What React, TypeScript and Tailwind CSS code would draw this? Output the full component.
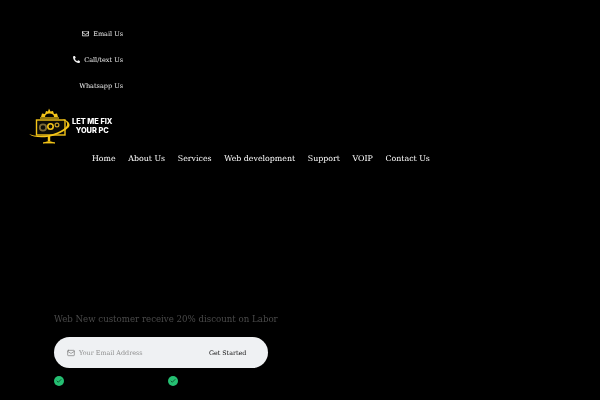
import { Check, Mail } from "lucide-react";
import { FaPhoneAlt, FaRegEnvelope } from "react-icons/fa";

const serif = "font-['DejaVu_Serif',serif]";

function Logo() {
  return (
    <div className="flex items-center w-[84px] h-[36px] [will-change:transform]">
      <svg width="45" height="36" viewBox="0 0 45 36" fill="none" className="shrink-0">
        <path d="M13 9 L14 5.5 L17 6 L18 3 L20 3.5 L21 0.5 L22.5 3.5 L25 3 L26 6 L29 5.5 L30 9 Z" fill="#f5c518" />
        <path d="M17 9 A4.5 3.5 0 0 1 26 9 Z" fill="#000" />
        <path d="M12 10 H31" stroke="#f5c518" strokeWidth="1.2" />
        <rect x="8.5" y="12" width="28.5" height="15" fill="#0c0c08" stroke="#f5c518" strokeWidth="1.4" />
        <circle cx="15" cy="19.5" r="3.2" stroke="#7d6a35" strokeWidth="1.8" />
        <circle cx="22.5" cy="18.5" r="2.7" stroke="#f5c518" strokeWidth="1.6" />
        <circle cx="29" cy="17" r="1.9" stroke="#c9a227" strokeWidth="1.2" />
        <path d="M1 26 C 8 32, 30 30, 41 19 C 43 16, 40 12, 34 11 C 39 13, 40.5 16, 38 19 C 28 28, 10 30, 1 26 Z" fill="#f5c518" />
        <path d="M21 28 V33" stroke="#f5c518" strokeWidth="2.4" />
        <path d="M15 35 Q21 32 27 35 Z" fill="#f5c518" stroke="#f5c518" strokeWidth="0.8" />
      </svg>
      <div className="-ml-[1px] font-['Inter',sans-serif] font-extrabold text-white text-[7.4px] leading-[9px] text-center whitespace-nowrap">
        <div>LET ME FIX</div>
        <div>YOUR PC</div>
      </div>
    </div>
  );
}

export default function App() {
  const nav = ["Home", "About Us", "Services", "Web development", "Support", "VOIP", "Contact Us"];
  return (
    <div className={`w-[600px] h-[400px] overflow-hidden bg-black text-white ${serif}`}>
      <div className="w-[123px] pt-[20px] flex flex-col items-end text-[6.5px] text-[#f0f0f0] [will-change:transform]">
        <div className="h-[26px] flex items-center gap-[4px]">
          <FaRegEnvelope size={7} />
          <span className="pt-[4px]">Email Us</span>
        </div>
        <div className="h-[26px] flex items-center gap-[4px]">
          <FaPhoneAlt size={7} />
          <span className="pt-[4px]">Call/text Us</span>
        </div>
        <div className="h-[26px] flex items-center">
          <span className="pt-[4px]">Whatsapp Us</span>
        </div>
      </div>
      <div className="pl-[28px] pt-[10px]">
        <Logo />
      </div>
      <div className="pl-[92px] pt-[8px] flex gap-[12.7px] h-[21px] items-center text-[7.85px] text-white whitespace-nowrap [will-change:transform]">
        {nav.map((n) => (
          <span key={n}>{n}</span>
        ))}
      </div>
      <div className="pl-[54px] pt-[146px]">
        <div className="text-[8.65px] h-[16px] leading-[16px] text-[#4a4a4a] whitespace-nowrap [will-change:transform]">
          Web New customer receive 20% discount on Labor
        </div>
        <div className="mt-[10px] w-[214px] h-[31px] rounded-[16px] bg-[#eff1f3] flex items-center pl-[13px] pr-[22px]">
          <Mail size={8} className="text-[#777]" />
          <span className="ml-[4px] pt-[2px] text-[6.4px] text-[#8f8f8f] [will-change:transform]">Your Email Address</span>
          <span className="ml-auto text-[6.3px] text-[#111] [will-change:transform]">Get Started</span>
        </div>
        <div className="mt-[8px] flex gap-[104px]">
          {[0, 1].map((i) => (
            <div key={i} className="w-[10px] h-[10px] rounded-full bg-[#25bf72] flex items-center justify-center">
              <Check size={6} strokeWidth={3} className="text-[#0a3a20]" />
            </div>
          ))}
        </div>
      </div>
    </div>
  );
}
